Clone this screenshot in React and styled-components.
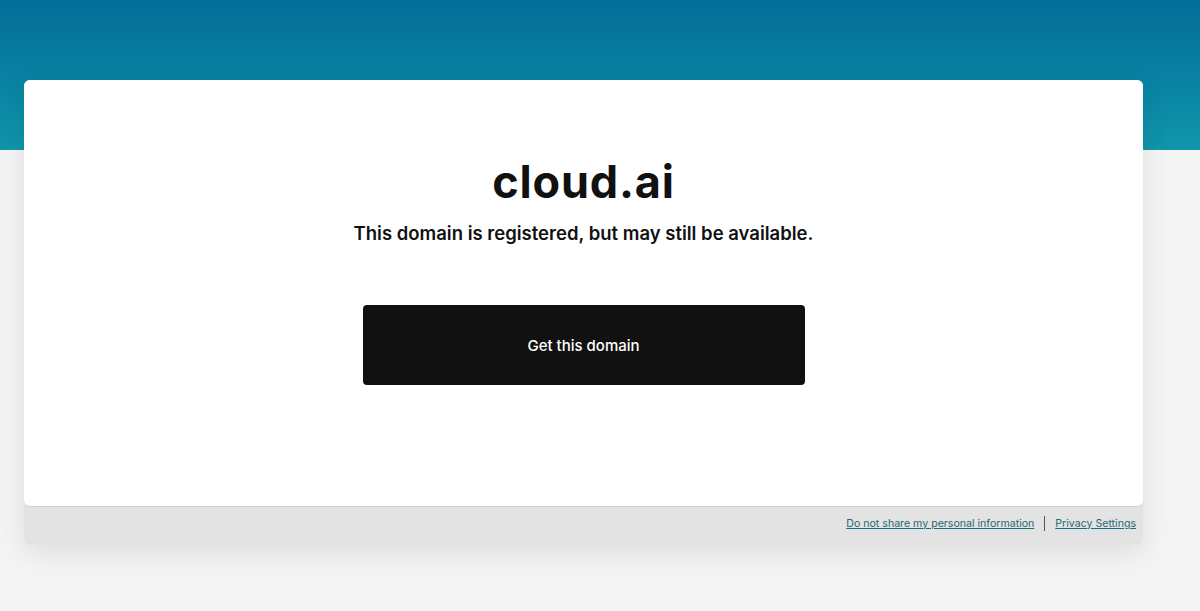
import React from 'react'
import styled, { createGlobalStyle } from 'styled-components'

const GlobalStyle = createGlobalStyle`
  html, body {
    margin: 0;
    padding: 0;
    height: 100%;
  }
  body {
    background: linear-gradient(180deg, #036d99 0%, #0a85a4 60%, #1096ab 100%) top left / 100% 150px no-repeat, #f4f4f4;
    font-family: Inter, "Noto Sans", Arial, sans-serif;
    overflow: hidden;
  }
`

function App() {
  return (
    <>
      <GlobalStyle />
      <Page>
        <Wrapper>
          <Card>
            <Title>cloud.ai</Title>
            <Subtitle>This domain is registered, but may still be available.</Subtitle>
            <BuyButton>Get this domain</BuyButton>
          </Card>
          <Footer>
            <FooterLink href="#">Do not share my personal information</FooterLink>
            <Divider />
            <FooterLink href="#">Privacy Settings</FooterLink>
          </Footer>
        </Wrapper>
      </Page>
    </>
  )
}

export default App

const Page = styled.div`
  padding-top: 80px;
  padding-left: 24px;
`

const Wrapper = styled.div`
  width: 1119px;
  background: #e3e3e3;
  border-radius: 6px;
  box-shadow: 0 8px 28px rgba(0, 0, 0, 0.09);
`

const Card = styled.div`
  height: 427px;
  background: #fff;
  border-radius: 6px;
  border-bottom: 1px solid #cfcfcf;
  box-sizing: border-box;
  display: flex;
  flex-direction: column;
  align-items: center;
  padding-top: 76px;
`

const Title = styled.h1`
  margin: 0;
  font-size: 45px;
  font-weight: 700;
  color: #111;
  letter-spacing: 0.8px;
  line-height: 52px;
`

const Subtitle = styled.p`
  margin: 13px 0 0;
  font-size: 18.5px;
  font-weight: 600;
  color: #111;
  line-height: 24px;
`

const BuyButton = styled.button`
  margin-top: 60px;
  width: 442px;
  height: 80px;
  background: #111;
  color: #fff;
  border: none;
  border-radius: 4px;
  font-family: inherit;
  font-size: 15px;
  font-weight: 500;
  cursor: pointer;
`

const Footer = styled.div`
  height: 32px;
  display: flex;
  justify-content: flex-end;
  align-items: center;
  gap: 10px;
  padding-right: 7px;
  padding-bottom: 6px;
`

const FooterLink = styled.a`
  font-size: 10.6px;
  color: #1d6b74;
  text-decoration: underline;
`

const Divider = styled.span`
  width: 1px;
  height: 15px;
  background: #555;
`
